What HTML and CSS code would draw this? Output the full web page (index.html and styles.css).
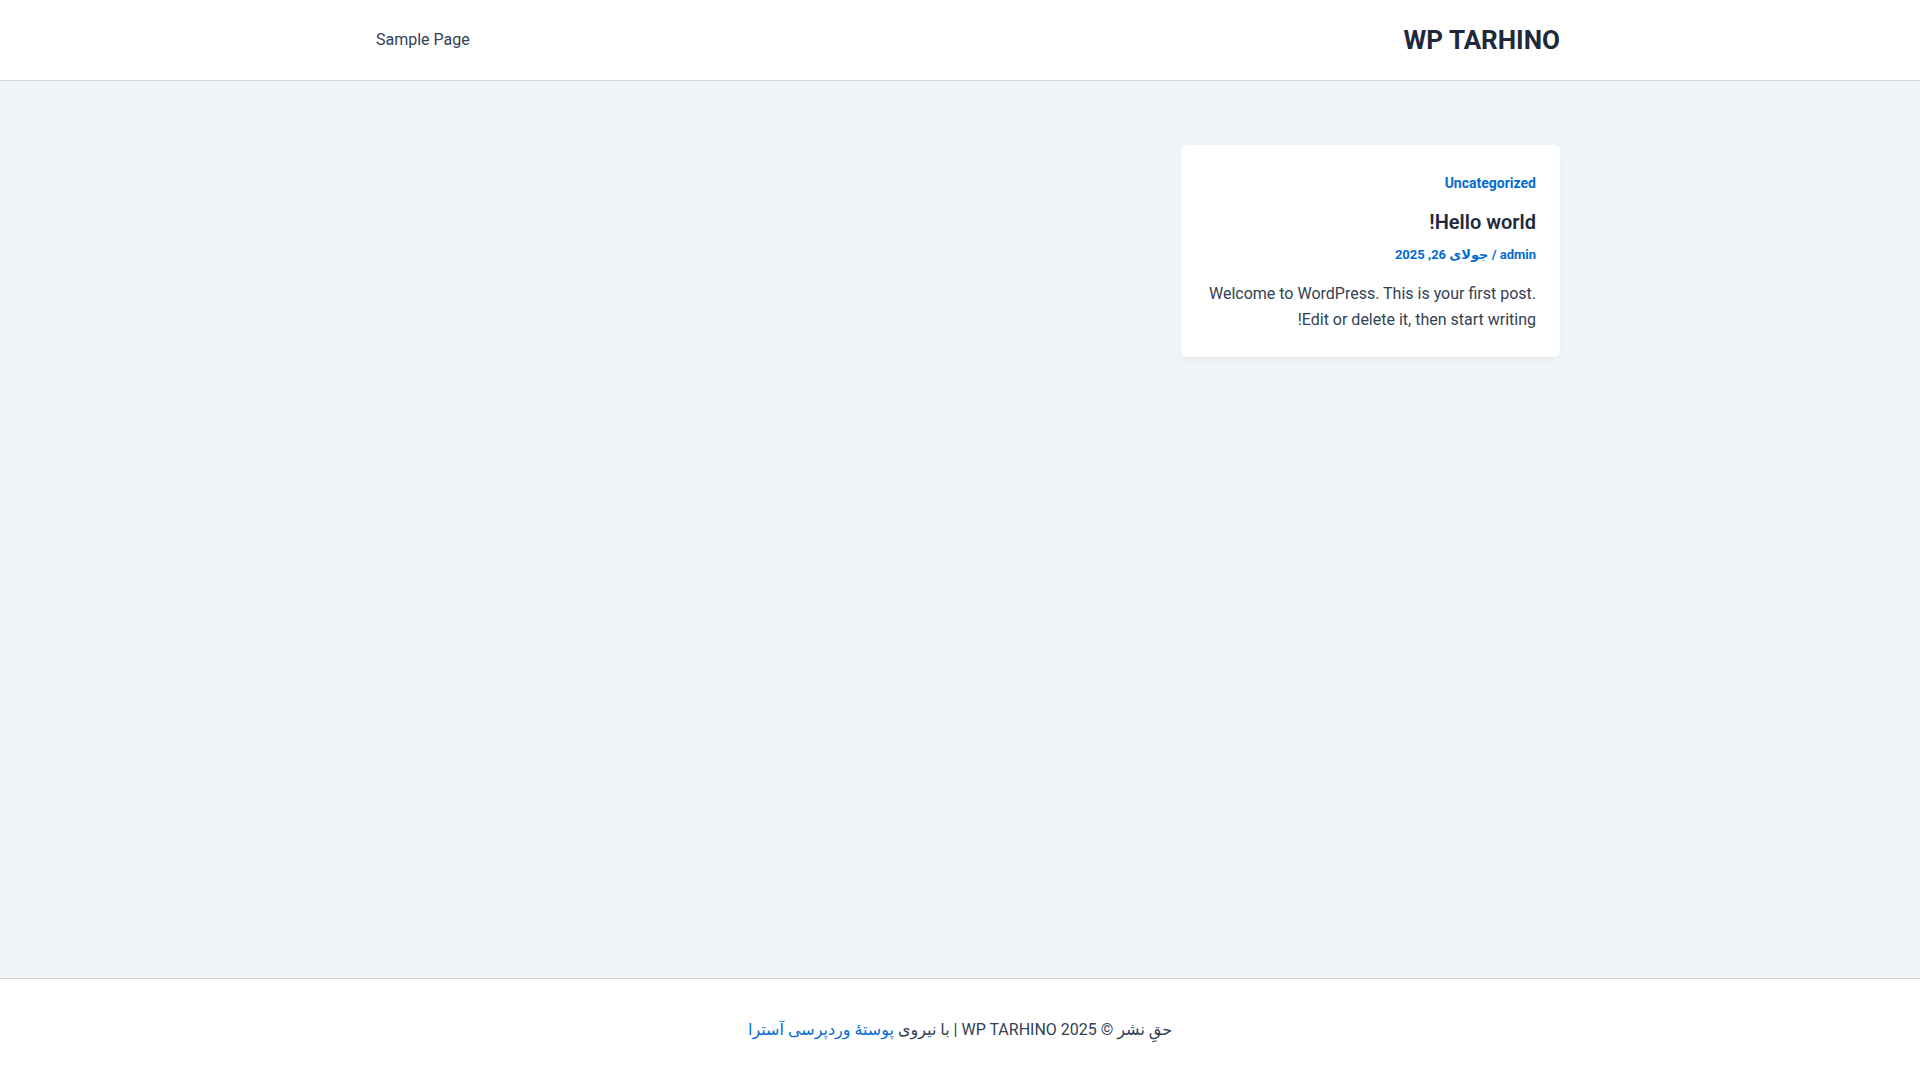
FILE: index.html
```html
<!DOCTYPE html>
<html lang="fa" dir="rtl">
<head>
    <meta charset="UTF-8">
    <meta name="viewport" content="width=device-width, initial-scale=1.0">
    <title>WP TARHINO</title>
    <link rel="stylesheet" href="styles.css">
</head>
<body>

<header class="site-header">
    <div class="container header-inner">
        <a class="site-title" href="#">WP TARHINO</a>
        <nav class="main-nav">
            <a href="#">Sample Page</a>
        </nav>
    </div>
</header>

<main class="site-main">
    <div class="container posts">
        <article class="post-card">
            <a class="post-cat" href="#">Uncategorized</a>
            <h2 class="post-title">Hello world!</h2>
            <div class="post-meta"><a href="#">admin</a> / <a href="#">جولای 26, 2025</a></div>
            <p class="post-excerpt">Welcome to WordPress. This is your first post. Edit or delete it, then start writing!</p>
        </article>
    </div>
</main>

<footer class="site-footer">
    <p>حقِ نشر © 2025 WP TARHINO | با نیروی <a href="#">پوستهٔ وردپرسی آسترا</a></p>
</footer>

</body>
</html>
```

FILE: styles.css
```css
html, body {
    margin: 0;
    padding: 0;
}

body {
    background-color: #f0f5fa;
    color: #334155;
    font-family: Roboto, "DejaVu Sans", sans-serif;
    font-size: 16px;
    line-height: 1.6;
    min-height: 100vh;
    display: flex;
    flex-direction: column;
}

a {
    text-decoration: none;
}

.container {
    width: 1200px;
    margin: 0 auto;
}

.site-header {
    background-color: #fff;
    border-bottom: 1px solid #d1d5db;
}

.header-inner {
    height: 80px;
    display: flex;
    align-items: center;
    justify-content: space-between;
}

.site-title {
    color: #1e293b;
    font-size: 26px;
    font-weight: 700;
    line-height: 1;
}

.main-nav a {
    color: #334155;
    font-size: 16px;
    padding: 0 16px;
}

.site-main {
    flex: 1;
    padding-top: 64px;
}

.posts {
    display: grid;
    grid-template-columns: repeat(3, 1fr);
    gap: 32px;
}

.post-card {
    background-color: #fff;
    border-radius: 6px;
    padding: 26px 24px 25px;
    box-shadow: 0 4px 10px -2px rgba(0, 0, 0, 0.05);
}

.post-cat {
    display: block;
    color: #046bd2;
    font-size: 14px;
    font-weight: 700;
    line-height: 24px;
}

.post-title {
    color: #1e293b;
    font-size: 20px;
    font-weight: 600;
    line-height: 30px;
    margin: 12px 0 0;
}

.post-meta {
    color: #046bd2;
    font-size: 13px;
    font-weight: 700;
    line-height: 20px;
    margin-top: 8px;
}

.post-meta a {
    color: #046bd2;
}

.post-excerpt {
    margin: 16px 0 0;
    line-height: 25.6px;
}

.site-footer {
    background-color: #fff;
    border-top: 1px solid #d1d5db;
    text-align: center;
    padding: 38px 0;
}

.site-footer p {
    margin: 0;
    line-height: 25px;
}

.site-footer a {
    color: #046bd2;
}
```
